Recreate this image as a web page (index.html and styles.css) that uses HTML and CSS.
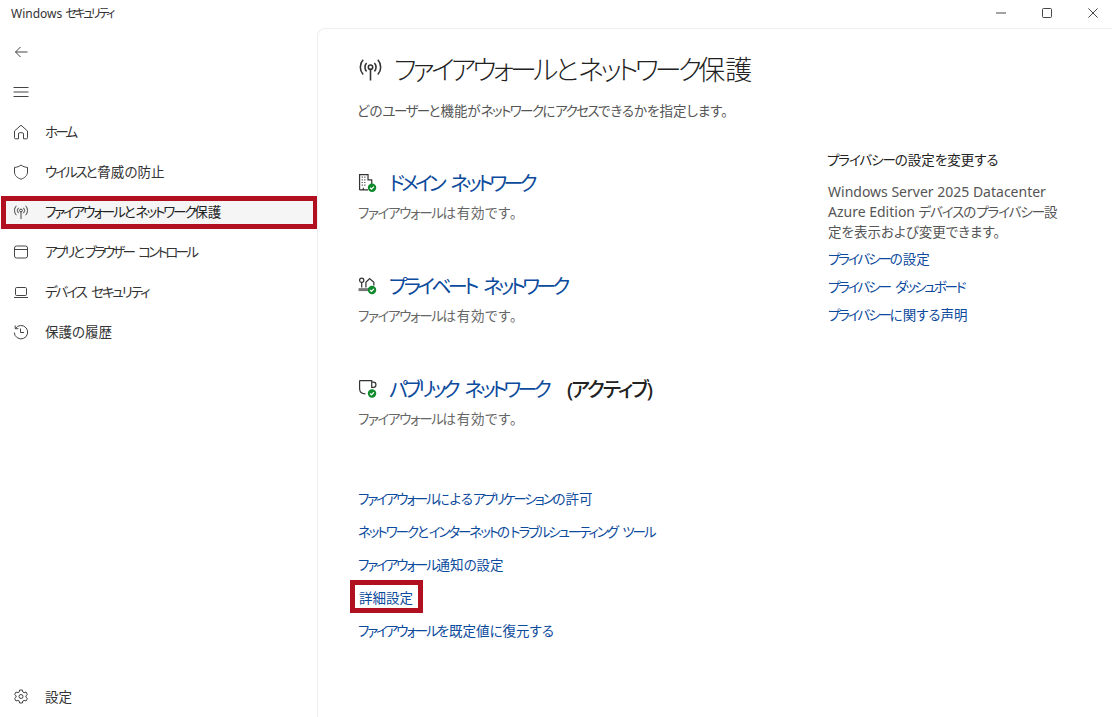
FILE: index.html
```html
<!DOCTYPE html>
<html lang="ja">
<head>
<meta charset="utf-8">
<title>Windows セキュリティ</title>
<link rel="stylesheet" href="styles.css">
</head>
<body>
<header class="titlebar">
  <span class="app-title">Windows <span class="k">セキュリティ</span></span>
  <div class="controls">
    <svg class="ctl" viewBox="0 0 12 12"><path d="M0 6h12" /></svg>
    <svg class="ctl" viewBox="0 0 12 12"><rect x="0.600" y="0.600" width="10.800" height="10.800" rx="1.200" /></svg>
    <svg class="ctl" viewBox="0 0 12 12"><path d="M0.500 0.500l11 11M11.500 0.500l-11 11" /></svg>
  </div>
</header>
<div class="shell">
  <nav class="sidebar">
    <div class="nav-item"><svg class="icon" viewBox="0 0 16 16"><path d="M14.500 8H2.500M7.500 3L2.500 8l5 5"/></svg></div>
    <div class="nav-item"><svg class="icon" viewBox="0 0 16 16"><path d="M0.500 3.500h15M0.500 8h15M0.500 12.500h15"/></svg></div>
    <a class="nav-item"><svg class="icon" viewBox="0 0 16 16"><path d="M1.500 7L8 1.200 14.500 7v6.800a1 1 0 0 1-1 1H10.500V10a1.300 1.300 0 0 0-1.300-1.300H6.800A1.300 1.300 0 0 0 5.500 10v4.800H2.500a1 1 0 0 1-1-1z"/></svg><span class="label"><span class="k kk">ホーム</span></span></a>
    <a class="nav-item"><svg class="icon" viewBox="0 0 16 16"><path d="M8 1c2 1.500 4 2.300 6.500 2.400V8c0 3.500-2.500 5.800-6.500 7.200C4 13.800 1.500 11.500 1.500 8V3.400C4 3.300 6 2.500 8 1z"/></svg><span class="label"><span class="k">ウイルス</span>と脅威の防止</span></a>
    <a class="nav-item selected"><svg class="icon" viewBox="0 0 16 16"><use href="#antenna"/></svg><span class="label"><span class="k">ファイアウォール</span>と<span class="k">ネットワーク</span>保護</span></a>
    <a class="nav-item"><svg class="icon" viewBox="0 0 16 16"><rect x="1.500" y="2" width="13" height="12" rx="2"/><path d="M1.500 5.500h13"/></svg><span class="label"><span class="k kk">アプリ</span>と<span class="k kk">ブラウザー コントロール</span></span></a>
    <a class="nav-item"><svg class="icon" viewBox="0 0 16 16"><rect x="2.500" y="3.500" width="11" height="8" rx="1.200"/><path d="M1 13.500h14"/></svg><span class="label"><span class="k">デバイス セキュリティ</span></span></a>
    <a class="nav-item"><svg class="icon" viewBox="0 0 16 16"><path d="M2.200 1.500v3.200h3.200M2.400 4.500A6.700 6.700 0 1 1 1.300 8.500"/><path d="M7.500 4.500V8.500h3.500"/></svg><span class="label">保護の履歴</span></a>
    <a class="nav-item settings"><svg class="icon" viewBox="0 0 16 16"><path d="M6.600 1h2.800l.4 2 1.300.7 1.900-.7 1.400 2.500-1.500 1.300v1.400l1.500 1.300-1.400 2.500-1.900-.7-1.300.7-.4 2H6.600l-.4-2-1.300-.7-1.900.7-1.400-2.500 1.500-1.300V6.800L1.600 5.500 3 3l1.900.7 1.300-.7z"/><circle cx="8" cy="7.500" r="2"/></svg><span class="label">設定</span></a>
  </nav>
  <main class="card">
    <div class="page-col">
      <div class="page-head">
        <svg class="head-icon" viewBox="0 0 16 16"><use href="#antenna"/></svg>
        <h1><span class="k">ファイアウォール</span>と<span class="k">ネットワーク</span>保護</h1>
      </div>
      <p class="lead">どの<span class="k">ユーザー</span>と機能が<span class="k">ネットワーク</span>に<span class="k">アクセス</span>できるかを指定します。</p>
      <section class="net">
        <div class="net-head">
          <svg class="net-icon" viewBox="0 0 18 18"><path class="dark" d="M1.500 16V1.500h8v5h3.500V12M1.500 16h8"/><path class="dark" d="M3.500 4h1M6 4h1M3.500 6.500h1M6 6.500h1M3.500 9h1M6 9h1M3.500 11.500h1M6 11.500h1M5 16v-2"/><circle class="ok" cx="13.300" cy="14" r="4"/><path class="tick" d="M11.500 14l1.300 1.300 2.300-2.400"/></svg>
          <a class="net-title">ドメイン ネットワーク</a>
        </div>
        <p class="status"><span class="k">ファイアウォール</span>は有効です。</p>
      </section>
      <section class="net">
        <div class="net-head">
          <svg class="net-icon" viewBox="0 0 18 18"><circle class="dark" cx="3.500" cy="4" r="2"/><path class="dark" d="M3.500 6v5M7.500 11V6L11 2.500 15 6v3"/><path class="bar" d="M0.500 11.500h10v2.800h-10z"/><circle class="ok" cx="13.300" cy="13.300" r="4"/><path class="tick" d="M11.500 13.300l1.300 1.300 2.300-2.400"/></svg>
          <a class="net-title">プライベート ネットワーク</a>
        </div>
        <p class="status"><span class="k">ファイアウォール</span>は有効です。</p>
      </section>
      <section class="net">
        <div class="net-head">
          <svg class="net-icon" viewBox="0 0 18 18"><path class="dark" d="M1.500 1.500h11.500v7M1.500 1.500v7.500c0 3 2 5 5.500 5M13 3h1.500a1.800 1.800 0 0 1 0 5H13"/><circle class="ok" cx="13.300" cy="13.700" r="4"/><path class="tick" d="M11.500 13.700l1.300 1.300 2.300-2.400"/></svg>
          <a class="net-title">パブリック ネットワーク</a><strong class="active">(アクティブ)</strong>
        </div>
        <p class="status"><span class="k">ファイアウォール</span>は有効です。</p>
      </section>
      <div class="links">
        <a><span><span class="k">ファイアウォール</span>による<span class="k">アプリケーション</span>の許可</span></a>
        <a><span><span class="k">ネットワーク</span>と<span class="k">インターネット</span>の<span class="k">トラブルシューティング ツール</span></span></a>
        <a><span><span class="k">ファイアウォール</span>通知の設定</span></a>
        <a class="boxed">詳細設定</a>
        <a><span><span class="k">ファイアウォール</span>を既定値に復元する</span></a>
      </div>
    </div>
    <aside class="aside">
      <h2><span class="k">プライバシー</span>の設定を変更する</h2>
      <p><span class="lat">Windows Server 2025 Datacenter</span><br><span class="lat">Azure Edition</span> <span class="k">デバイス</span>の<span class="k">プライバシー</span>設<br>定を表示および変更できます。</p>
      <a><span class="k">プライバシー</span>の設定</a>
      <a><span class="k">プライバシー ダッシュボード</span></a>
      <a><span class="k">プライバシー</span>に関する声明</a>
    </aside>
  </main>
</div>
<svg class="defs" width="0" height="0">
  <symbol id="antenna" viewBox="0 0 16 16">
    <circle cx="8" cy="6.500" r="1.400"/>
    <path d="M8 8v7M5.500 3.800a4 4 0 0 0 0 5.400M10.500 3.800a4 4 0 0 1 0 5.400M3.300 1.800a7 7 0 0 0 0 9.400M12.700 1.800a7 7 0 0 1 0 9.400"/>
  </symbol>
</svg>
</body>
</html>
```
FILE: styles.css
```css
* { box-sizing: border-box; }
html, body { height: 100%; }
body {
  margin: 0;
  background: #fff;
  color: #1f1f1f;
  font-family: "Noto Sans", "Noto Sans CJK JP", sans-serif;
  font-feature-settings: "palt";
  font-size: 13.500px;
  overflow: hidden;
  display: flex;
  flex-direction: column;
}
a { color: inherit; text-decoration: none; }
h1, h2, p { margin: 0; font-weight: 400; }
svg { fill: none; stroke: currentColor; stroke-width: 1; flex: none; }
.defs { position: absolute; }
.k { letter-spacing: -0.155em; word-spacing: 0.3em; }
.kk { letter-spacing: -0.2em; }
.lat { font-size: 14px; }

.titlebar {
  height: 28px;
  flex: none;
  display: flex;
  align-items: center;
  justify-content: space-between;
  padding: 0 14px 2px 11px;
}
.app-title { font-size: 12px; color: #333; }
.app-title .k { letter-spacing: -0.2em; }
.controls { display: flex; gap: 36px; }
.ctl { width: 10px; height: 10px; color: #222; margin-top: -1px; }

.shell { flex: 1; display: flex; min-height: 0; }

.sidebar {
  width: 317px;
  flex: none;
  padding: 4px 0 0 0;
  display: flex;
  flex-direction: column;
  color: #333;
}
.nav-item {
  height: 40px;
  flex: none;
  display: flex;
  align-items: center;
  padding-left: 13px;
  gap: 16px;
}
.label { margin-top: -2px; }
.icon { width: 16px; height: 16px; color: #444; }
.selected {
  height: 33px;
  margin: 3.500px -1px 3.500px 1px;
  padding-left: 7px;
  border: 5px solid #b01020;
  background: #f5f5f5;
  color: #222;
}
.settings { margin-top: auto; }

.card {
  flex: 1;
  min-width: 0;
  display: flex;
  border-top: 1px solid #eee;
  border-left: 1px solid #eee;
  border-top-left-radius: 8px;
  padding: 0 0 0 40px;
}
.page-col { width: 470px; flex: none; }
.page-head {
  display: flex;
  align-items: center;
  gap: 11px;
  height: 40px;
  margin-top: 20px;
}
.head-icon { width: 25px; height: 25px; color: #333; }
h1 { font-size: 27px; color: #222; font-weight: 300; white-space: nowrap; margin-top: -2px; }
h1 .k { letter-spacing: -0.14em; }
.lead { margin-top: 11px; color: #555; margin-left: -1px; }
.lead .k { letter-spacing: -0.12em; }

.net { margin-top: 48.500px; }
.net:first-of-type { margin-top: 47.500px; }
.net-head { display: flex; align-items: center; height: 30px; }
.net-icon { width: 19px; height: 19px; color: #333; margin-right: 12px; }
.dark { stroke: #333; stroke-width: 1.150; }
.bar { fill: #777; stroke: none; }
.ok { fill: #0f8a2c; stroke: none; }
.tick { stroke: #fff; stroke-width: 1.200; }
.net-title { font-size: 20px; letter-spacing: -0.185em; word-spacing: 0.3em; color: #0b4a9c; }
.active { font-size: 20px; letter-spacing: -0.1em; font-weight: 500; margin-left: 19px; color: #222; }
.status { margin-top: 4.500px; color: #666; letter-spacing: 0.05em; }
.status .k { letter-spacing: -0.1em; }

.links { display: flex; flex-direction: column; align-items: flex-start; margin-top: 53px; color: #0b4a9c; }
.links a { height: 33px; display: flex; align-items: center; white-space: nowrap; }
.links .boxed {
  margin-left: -8px;
  width: 73px;
  padding-left: 4px;
  border: 5px solid #b01020;
}

.aside { padding-top: 121px; width: 250px; color: #555; }
.aside h2 { font-size: 13.500px; line-height: 20px; color: #222; margin-left: -1px; }
.aside h2 .k, .aside p .k { letter-spacing: -0.08em; }
.aside p { margin-top: 12px; line-height: 20px; }
.aside a { display: block; height: 28px; line-height: 20px; color: #0b4a9c; }
.aside p + a { margin-top: 7px; }
```
